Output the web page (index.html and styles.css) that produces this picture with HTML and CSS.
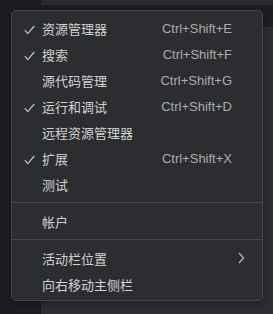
FILE: index.html
```html
<!DOCTYPE html>
<html lang="zh">
<head>
<meta charset="utf-8">
<link rel="stylesheet" href="styles.css">
</head>
<body>
<div class="app">
  <div class="activity"></div>
  <div class="main">
    <div class="topstrip"></div>
    <div class="tabs"></div>
    <div class="editor"></div>
  </div>
</div>
<div class="menu">
  <div class="item"><span class="check"><svg width="11" height="10" viewBox="0 0 11 10"><path d="M0.8 5.2 L3.8 8.6 L10.3 1" fill="none" stroke="#c4c4c4" stroke-width="1.2"/></svg></span><span class="label">资源管理器</span><span class="key">Ctrl+Shift+E</span><span class="sub"></span></div>
  <div class="item"><span class="check"><svg width="11" height="10" viewBox="0 0 11 10"><path d="M0.8 5.2 L3.8 8.6 L10.3 1" fill="none" stroke="#c4c4c4" stroke-width="1.2"/></svg></span><span class="label">搜索</span><span class="key">Ctrl+Shift+F</span><span class="sub"></span></div>
  <div class="item"><span class="check"></span><span class="label">源代码管理</span><span class="key">Ctrl+Shift+G</span><span class="sub"></span></div>
  <div class="item"><span class="check"><svg width="11" height="10" viewBox="0 0 11 10"><path d="M0.8 5.2 L3.8 8.6 L10.3 1" fill="none" stroke="#c4c4c4" stroke-width="1.2"/></svg></span><span class="label">运行和调试</span><span class="key">Ctrl+Shift+D</span><span class="sub"></span></div>
  <div class="item"><span class="check"></span><span class="label">远程资源管理器</span><span class="key"></span><span class="sub"></span></div>
  <div class="item"><span class="check"><svg width="11" height="10" viewBox="0 0 11 10"><path d="M0.8 5.2 L3.8 8.6 L10.3 1" fill="none" stroke="#c4c4c4" stroke-width="1.2"/></svg></span><span class="label">扩展</span><span class="key">Ctrl+Shift+X</span><span class="sub"></span></div>
  <div class="item"><span class="check"></span><span class="label">测试</span><span class="key"></span><span class="sub"></span></div>
  <div class="sep"></div>
  <div class="item"><span class="check"></span><span class="label">帐户</span><span class="key"></span><span class="sub"></span></div>
  <div class="sep"></div>
  <div class="item"><span class="check"></span><span class="label">活动栏位置</span><span class="key"></span><span class="sub"><svg width="7" height="12" viewBox="0 0 7 12"><path d="M1 1 L5.6 6 L1 11" fill="none" stroke="#b8b8b8" stroke-width="1.2"/></svg></span></div>
  <div class="item"><span class="check"></span><span class="label">向右移动主侧栏</span><span class="key"></span><span class="sub"></span></div>
</div>
</body>
</html>
```

FILE: styles.css
```css
html, body {
  margin: 0;
  padding: 0;
  width: 273px;
  height: 314px;
  overflow: hidden;
  background: #2b2d30;
  font-family: "Liberation Sans", "Noto Sans CJK SC", sans-serif;
}

.app {
  display: flex;
  width: 273px;
  height: 314px;
}

.activity {
  width: 41px;
  background: #1c1d20;
}

.main {
  flex: 1;
  display: flex;
  flex-direction: column;
}

.topstrip {
  height: 5px;
  background: #2a2b2e;
}

.tabs {
  height: 22px;
  background: #1d1e21;
}

.editor {
  flex: 1;
  background: #2b2d30;
}

.menu {
  position: absolute;
  left: 11px;
  top: 10px;
  width: 252px;
  box-sizing: border-box;
  padding: 5px 0 2px;
  background: #2b2d30;
  border: 1px solid #45474b;
  border-radius: 5px;
  box-shadow: 0 2px 6px rgba(0, 0, 0, 0.35);
}

.item {
  display: grid;
  grid-template-columns: 30px 1fr auto 30px;
  align-items: center;
  height: 26px;
  font-size: 13px;
  color: #d2d2d2;
}

.check {
  display: flex;
  align-items: center;
  padding-left: 12px;
  height: 26px;
  padding-top: 1px;
  box-sizing: border-box;
}

.label {
  white-space: nowrap;
  font-family: "Noto Sans CJK SC", sans-serif;
  line-height: 26px;
  margin-top: -1px;
}

.key {
  color: #acacac;
  white-space: nowrap;
  line-height: 26px;
  margin-top: -1px;
}

.sub {
  display: flex;
  align-items: center;
  padding-left: 6px;
  height: 26px;
  margin-top: -2px;
}

.sep {
  height: 1px;
  background: #45474b;
  margin: 4px 0 6px;
}
```
